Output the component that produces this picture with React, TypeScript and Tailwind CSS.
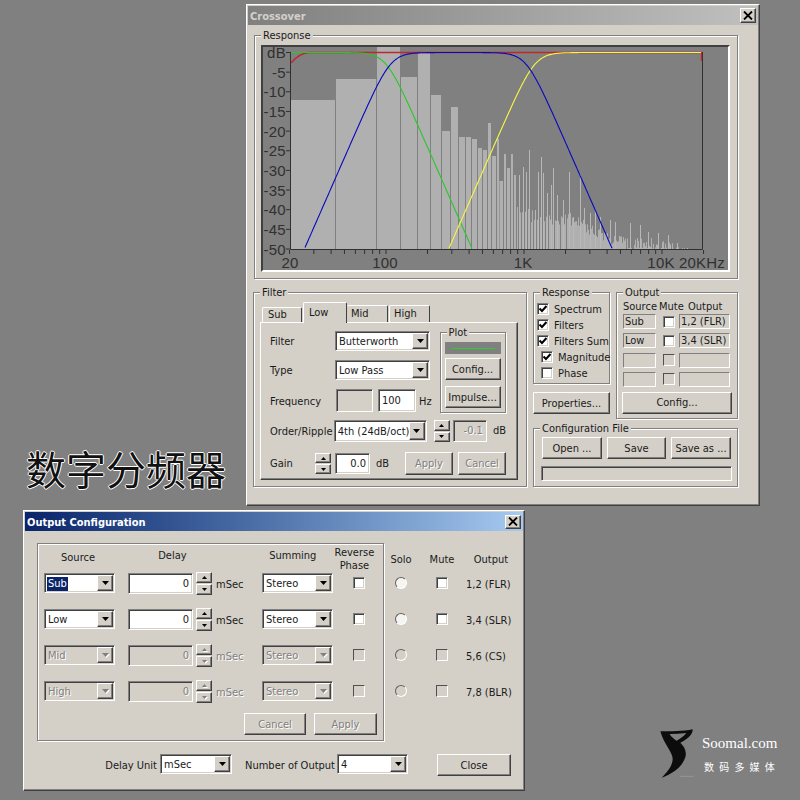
import * as React from "react";

const raised =
  "border border-t-white border-l-white border-r-[#404040] border-b-[#404040] shadow-[inset_-1px_-1px_0_#808080]";
const sunken =
  "border border-t-[#808080] border-l-[#808080] border-r-white border-b-white shadow-[inset_1px_1px_0_#404040,inset_-1px_-1px_0_#d4d0c8]";
const thinSunken = "border border-t-[#808080] border-l-[#808080] border-r-white border-b-white";
const disabledText = "text-[#808080] [text-shadow:1px_1px_0_white]";

function Group({ title, className, children }: { title?: string; className: string; children: React.ReactNode }) {
  return (
    <div className={`relative border border-[#808080] shadow-[1px_1px_0_white,inset_1px_1px_0_white] ${className}`}>
      {title && (
        <span className="absolute -top-[7px] left-[6px] bg-[#d4d0c8] px-[2px] leading-[14px] whitespace-nowrap">
          {title}
        </span>
      )}
      {children}
    </div>
  );
}

function Btn({ label, className, disabled }: { label: string; className: string; disabled?: boolean }) {
  return (
    <div className={`flex items-center justify-center whitespace-nowrap bg-[#d4d0c8] pt-px ${raised} ${disabled ? disabledText : ""} ${className}`}>
      {label}
    </div>
  );
}

function Arrow({ disabled, small, up }: { disabled?: boolean; small?: boolean; up?: boolean }) {
  const w = small ? 5 : 7;
  const h = small ? 3 : 4;
  return (
    <svg width={w} height={h} viewBox={`0 0 ${w} ${h}`} className={disabled ? "drop-shadow-[1px_1px_0_white]" : ""}>
      <polygon
        points={up ? `0,${h} ${w},${h} ${w / 2},0` : `0,0 ${w},0 ${w / 2},${h}`}
        fill={disabled ? "#808080" : "#000"}
      />
    </svg>
  );
}

function Combo({
  value,
  className,
  disabled,
  selected,
}: {
  value: string;
  className: string;
  disabled?: boolean;
  selected?: boolean;
}) {
  return (
    <div className={`flex items-stretch overflow-hidden p-px ${sunken} ${disabled ? "bg-[#d4d0c8]" : "bg-white"} ${className}`}>
      <div className={`flex min-w-0 flex-1 items-center overflow-hidden whitespace-nowrap pt-px pl-px ${disabled ? disabledText : ""}`}>
        <span className={selected ? "bg-[#0a246a] px-px text-white" : "px-px"}>{value}</span>
      </div>
      <div className={`flex w-[16px] shrink-0 items-center justify-center bg-[#d4d0c8] ${raised}`}>
        <Arrow disabled={disabled} />
      </div>
    </div>
  );
}

function Spin({ className, disabled }: { className: string; disabled?: boolean }) {
  return (
    <div className={`flex shrink-0 flex-col gap-px ${className}`}>
      <div className={`flex flex-1 items-center justify-center bg-[#d4d0c8] ${raised}`}>
        <Arrow small up disabled={disabled} />
      </div>
      <div className={`flex flex-1 items-center justify-center bg-[#d4d0c8] ${raised}`}>
        <Arrow small disabled={disabled} />
      </div>
    </div>
  );
}

function Field({
  value,
  className,
  disabled,
  right,
}: {
  value?: string;
  className: string;
  disabled?: boolean;
  right?: boolean;
}) {
  return (
    <div
      className={`flex shrink-0 items-center px-[3px] ${sunken} ${disabled ? `bg-[#d4d0c8] ${disabledText}` : "bg-white"} ${right ? "justify-end" : ""} ${className}`}
    >
      {value}
    </div>
  );
}

function Check({ checked, disabled, className = "" }: { checked?: boolean; disabled?: boolean; className?: string }) {
  return (
    <div
      className={`flex h-[12px] w-[12px] shrink-0 items-center justify-center ${
        disabled
          ? "border border-t-[#505050] border-l-[#505050] border-r-white border-b-white bg-[#d4d0c8]"
          : `${sunken} bg-white`
      } ${className}`}
    >
      {checked && (
        <svg width="10" height="10" viewBox="0 0 10 10">
          <path d="M1.5 4.5 L4 7 L8.5 2" fill="none" stroke="#000" strokeWidth="2" />
        </svg>
      )}
    </div>
  );
}

function Radio({ disabled }: { disabled?: boolean }) {
  return (
    <div
      className={`h-[12px] w-[12px] rounded-full border-[1.5px] border-t-[#606060] border-l-[#606060] border-r-white border-b-white ${disabled ? "bg-[#d4d0c8]" : "bg-[#f4f4f0]"}`}
    />
  );
}

function CloseBox({ className }: { className: string }) {
  return (
    <div className={`flex items-center justify-center bg-[#d4d0c8] ${raised} ${className}`}>
      <svg width="10" height="9" viewBox="0 0 10 9">
        <path d="M1 0.5 L9 8.5 M9 0.5 L1 8.5" stroke="#000" strokeWidth="1.8" />
      </svg>
    </div>
  );
}

// spectrum bars taken off the picture: [left, right, top]
const BARS: [number, number, number][] = [
  [291, 335, 100], [336, 376, 79], [377, 400, 47], [401, 417, 77], [418, 430, 53], [431, 441, 95],
  [442, 450, 131], [451, 458, 107], [459, 465, 137], [466, 471, 137], [472, 477, 139], [478, 482, 148],
  [483, 487, 150], [488, 491, 123], [492, 496, 156], [497, 499, 139], [499.5, 503, 181], [504, 506, 154],
  [507, 510, 168], [511, 513, 154], [514, 516, 175],
];

const SPIKES: [number, number][] = [
  [519, 175], [523, 167], [526, 172], [529, 150], [535, 210], [538, 172], [541, 157], [543, 173], [547, 193],
  [551, 185], [553, 168], [557, 195], [563, 200], [569, 172], [573, 217], [580, 175], [584, 208], [590, 213],
  [595, 210], [600, 217], [610, 220], [615, 222], [630, 223], [640, 225], [648, 232], [658, 233], [668, 235],
  [677, 243], [687, 248],
];

const ENVELOPE: [number, number][] = [
  [516, 205], [540, 212], [570, 212], [600, 226], [620, 236], [660, 238], [680, 244], [690, 249],
];

function envelope(x: number) {
  for (let i = 1; i < ENVELOPE.length; i++) {
    const [x0, y0] = ENVELOPE[i - 1];
    const [x1, y1] = ENVELOPE[i];
    if (x <= x1) return y0 + ((x - x0) / (x1 - x0)) * (y1 - y0);
  }
  return 249;
}

function noise(x: number) {
  const v = Math.sin(x * 12.9898) * 43758.5453;
  return v - Math.floor(v);
}

const xOf = (f: number) => 524 + Math.log10(f / 1000) * 138;
const yOf = (db: number) => 52.5 - db * 3.93;

function curve(hp: number | null, lp: number | null, x0: number, x1: number) {
  const pts: string[] = [];
  for (let x = x0; x <= x1; x++) {
    const f = 1000 * Math.pow(10, (x - 524) / 138);
    let db = 0;
    if (hp) db -= 10 * Math.log10(1 + Math.pow(hp / f, 8));
    if (lp) db -= 10 * Math.log10(1 + Math.pow(f / lp, 8));
    if (db >= -50) pts.push(`${x},${yOf(db).toFixed(1)}`);
  }
  return pts.join(" ");
}

function ResponseChart() {
  const ticks: number[] = [];
  for (const d of [10, 100, 1000]) {
    for (let k = 1; k < 10; k++) {
      const f = d * k;
      if (f >= 20) ticks.push(f);
    }
  }
  ticks.push(10000, 20000);

  const columns: React.ReactNode[] = [];
  for (let x = 517; x < 690; x++) {
    if (x < 572 && x % 3 === 2) continue;
    const top = envelope(x) + noise(x) * 14;
    columns.push(<rect key={x} x={x} y={top} width="1" height={Math.max(249 - top, 0)} fill="#b0b0b0" />);
  }

  return (
    <svg viewBox="263 47 465 223" className="block h-full w-full overflow-visible">
      <rect x="263" y="47" width="465" height="223" fill="#808080" />
      {BARS.map(([l, r, t]) => (
        <rect key={l} x={l} y={t} width={r - l} height={249 - t} fill="#b0b0b0" />
      ))}
      {columns}
      {SPIKES.map(([x, t]) => (
        <rect key={x} x={x} y={t} width="1" height={249 - t} fill="#b8b8b8" />
      ))}
      <path d="M290.5 52 V249.5 H702.5 V52" fill="none" stroke="#303030" />
      {[0, 5, 10, 15, 20, 25, 30, 35, 40, 45, 50].map((d) => (
        <line key={d} x1="286" x2="290" y1={yOf(-d)} y2={yOf(-d)} stroke="#303030" />
      ))}
      {ticks.map((f) => (
        <line key={f} x1={xOf(f)} x2={xOf(f)} y1="250" y2="254" stroke="#303030" />
      ))}
      <g fill="#303030" fontSize="15" fontFamily="'Liberation Sans', sans-serif" textAnchor="end" letterSpacing="0.3">
        {[0, 5, 10, 15, 20, 25, 30, 35, 40, 45, 50].map((d) => (
          <text key={d} x="286" y={yOf(-d) + 5.5}>
            {d === 0 ? "dB" : `-${d}`}
          </text>
        ))}
      </g>
      <g fill="#303030" fontSize="15" fontFamily="'Liberation Sans', sans-serif" textAnchor="middle" letterSpacing="0.2">
        <text x="290" y="268">20</text>
        <text x="385" y="268">100</text>
        <text x="523" y="268">1K</text>
        <text x="661" y="268">10K</text>
        <text x="702" y="268">20KHz</text>
      </g>
      <path
        d="M291 63 C295 58 300 53.5 309 52.5 H700 L701.5 52.5 V61"
        fill="none"
        stroke="#c02828"
        strokeWidth="1.3"
      />
      <polyline points={curve(null, 100, 291, 480)} fill="none" stroke="#28c828" strokeWidth="1.1" />
      <polyline points={curve(1200, null, 440, 701)} fill="none" stroke="#f8f840" strokeWidth="1.1" />
      <polyline points={curve(108, 1035, 295, 620)} fill="none" stroke="#0808c0" strokeWidth="1.1" />
    </svg>
  );
}

function FilterPanel() {
  return (
    <Group title="Filter" className="-ml-px h-[195px] w-[274px] pt-[9px] pl-[6px]">
      <div className="flex items-end pl-[2px]">
        <div className="mr-px flex h-[15px] w-[40px] items-center rounded-t-[2px] border-t border-l border-r border-t-white border-l-white border-r-[#404040] pl-[5px]">
          Sub
        </div>
        <div className="relative z-10 -mb-px flex h-[21px] w-[44px] items-start rounded-t-[2px] border-t border-l border-r border-t-white border-l-white border-r-[#404040] bg-[#d4d0c8] pt-[3px] pl-[5px]">
          Low
        </div>
        <div className="mr-px flex h-[17px] w-[41px] items-center rounded-t-[2px] border-t border-r border-t-white border-r-[#404040] pl-[4px]">
          Mid
        </div>
        <div className="flex h-[17px] w-[41px] items-center rounded-t-[2px] border-t border-l border-r border-t-white border-l-white border-r-[#404040] pl-[4px]">
          High
        </div>
      </div>
      <div className={`h-[158px] w-[258px] pt-[8px] pr-[11px] pl-[9px] ${raised}`}>
        <div className="flex h-[82px]">
          <div className="w-[171px]">
            <div className="flex items-center">
              <span className="w-[65px] pt-[2px]">Filter</span>
              <Combo value="Butterworth" className="h-[20px] w-[95px]" />
            </div>
            <div className="mt-[9px] flex items-center">
              <span className="w-[65px] pt-[2px]">Type</span>
              <Combo value="Low Pass" className="h-[20px] w-[95px]" />
            </div>
            <div className="mt-[9px] flex items-center">
              <span className="w-[66px] pt-[2px]">Frequency</span>
              <Field disabled className="h-[23px] w-[37px]" />
              <Field value="100" className="ml-[5px] h-[23px] w-[38px]" />
              <span className="ml-[3px] pt-[2px]">Hz</span>
            </div>
          </div>
          <Group title="Plot" className="mt-px h-[81px] w-[67px] pt-[9px] pl-[4px]">
            <div className="flex h-[12px] w-[56px] items-center justify-center bg-[#808080]">
              <div className="h-px w-[44px] bg-[#28d028]" />
            </div>
            <Btn label="Config..." className="mt-[4px] h-[22px] w-[56px]" />
            <Btn label="Impulse..." className="mt-[6px] h-[22px] w-[56px]" />
          </Group>
        </div>
        <div className="mt-[7px] flex items-center">
          <span className="w-[65px] pt-[2px] whitespace-nowrap">Order/Ripple</span>
          <Combo value="4th (24dB/oct)" className="h-[22px] w-[95px]" />
          <Spin className="ml-[7px] h-[22px] w-[16px]" />
          <Field value="-0.1" disabled right className="ml-[3px] h-[22px] w-[34px]" />
          <span className="ml-[6px]">dB</span>
        </div>
        <div className="mt-[10px] flex items-center">
          <span className="w-[45px]">Gain</span>
          <Spin className="h-[21px] w-[16px]" />
          <Field value="0.0" right className="ml-[4px] h-[21px] w-[35px]" />
          <span className="ml-[6px]">dB</span>
          <Btn label="Apply" disabled className="ml-auto h-[23px] w-[48px]" />
          <Btn label="Cancel" disabled className="ml-[5px] h-[23px] w-[48px]" />
        </div>
      </div>
    </Group>
  );
}

const OUT_ROWS = [
  { src: "Sub", out: "1,2 (FLR)", on: true },
  { src: "Low", out: "3,4 (SLR)", on: true },
  { src: "", out: "", on: false },
  { src: "", out: "", on: false },
];

function RightColumn() {
  const boxes = [
    { label: "Spectrum", checked: true, indent: false },
    { label: "Filters", checked: true, indent: false },
    { label: "Filters Sum", checked: true, indent: false },
    { label: "Magnitude", checked: true, indent: true },
    { label: "Phase", checked: false, indent: true },
  ];
  return (
    <div className="ml-[6px] w-[205px]">
      <div className="flex gap-[6px]">
        <div className="w-[77px]">
          <Group title="Response" className="h-[92px] pt-[8px] pl-[3px]">
            {boxes.map((b) => (
              <div key={b.label} className={`flex h-[16px] items-center whitespace-nowrap ${b.indent ? "pl-[4px]" : ""}`}>
                <Check checked={b.checked} />
                <span className="ml-[5px] pt-[2px]">{b.label}</span>
              </div>
            ))}
          </Group>
          <Btn label="Properties..." className="mt-[8px] h-[22px] w-[77px]" />
        </div>
        <Group title="Output" className="h-[127px] w-[122px] pt-[6px]">
          <div className="flex h-[15px] items-center whitespace-nowrap pl-[6px]">
            <span className="w-[36px]">Source</span>
            <span className="w-[29px]">Mute</span>
            <span>Output</span>
          </div>
          <div className="flex flex-col gap-[4.33px] pl-[6px]">
            {OUT_ROWS.map((r, i) => (
              <div key={i} className="flex h-[15px] items-center">
                <div className={`flex h-full w-[33px] items-center pt-px pl-px ${thinSunken}`}>{r.src}</div>
                <Check disabled={!r.on} className="ml-[7px]" />
                <div className={`ml-[4px] flex h-full w-[51px] items-center pt-px pl-px whitespace-nowrap ${thinSunken}`}>{r.out}</div>
              </div>
            ))}
          </div>
          <Btn label="Config..." className="mt-[5px] ml-[5px] h-[22px] w-[110px]" />
        </Group>
      </div>
      <Group title="Configuration File" className="mt-[9px] h-[59px] pt-[8px] pl-[7px]">
        <div className="flex gap-[5px]">
          <Btn label="Open ..." className="ml-px h-[22px] w-[60px]" />
          <Btn label="Save" className="h-[22px] w-[59px]" />
          <Btn label="Save as ..." className="h-[22px] w-[60px]" />
        </div>
        <div className={`mt-[7px] h-[15px] w-[191px] ${sunken}`} />
      </Group>
    </div>
  );
}

function CrossoverWindow() {
  return (
    <div className={`absolute top-[4px] left-[246px] h-[502px] w-[514px] bg-[#d4d0c8] ${raised}`}>
      <div className="m-px flex h-[19px] items-center justify-between bg-linear-to-r from-[#808080] to-[#c0c0c0] pl-[2px]">
        <span className="pt-[2px] font-bold text-[#d4d0c8]">Crossover</span>
        <CloseBox className="mr-[2px] h-[15px] w-[16px]" />
      </div>
      <Group title="Response" className="mt-[10px] ml-[7px] h-[244px] w-[484px] pt-[9px] pl-[6px]">
        <div className="h-[227px] w-[469px] border-2 border-t-[#404040] border-l-[#404040] border-r-white border-b-white">
          <ResponseChart />
        </div>
      </Group>
      <div className="mt-[13px] ml-[7px] flex">
        <FilterPanel />
        <RightColumn />
      </div>
    </div>
  );
}

const SOURCES = [
  { src: "Sub", on: true, out: "1,2 (FLR)" },
  { src: "Low", on: true, out: "3,4 (SLR)" },
  { src: "Mid", on: false, out: "5,6 (CS)" },
  { src: "High", on: false, out: "7,8 (BLR)" },
];

function OutputConfigWindow() {
  return (
    <div className={`absolute top-[510px] left-[23px] h-[281px] w-[502px] bg-[#d4d0c8] ${raised}`}>
      <div className="m-px flex h-[19px] items-center justify-between bg-linear-to-r from-[#0a246a] to-[#a6caf0] pl-[2px]">
        <span className="pt-[2px] font-bold text-white">Output Configuration</span>
        <CloseBox className="mr-[2px] h-[14px] w-[16px]" />
      </div>
      <div className="mt-[12px] ml-[13px] flex">
        <Group className="h-[198px] w-[347px] pl-[6px]">
          <div className="flex h-[29px] text-center">
            <span className="w-[69px] pt-[7px]">Source</span>
            <span className="ml-[15px] w-[92px] pt-[5px]">Delay</span>
            <span className="ml-[42px] w-[67px] pt-[5px]">Summing</span>
            <span className="w-[58px] pt-[2px] leading-[13px]">
              Reverse
              <br />
              Phase
            </span>
          </div>
          <div className="flex flex-col gap-[16px]">
            {SOURCES.map((s) => (
              <div key={s.src} className="flex h-[20px] items-start">
                <Combo value={s.src} selected={s.src === "Sub"} disabled={!s.on} className="h-[20px] w-[71px]" />
                <Field value="0" right disabled={!s.on} className="ml-[13px] h-[21px] w-[65px]" />
                <Spin disabled={!s.on} className="-mt-px ml-[3px] h-[23px] w-[16px]" />
                <span className={`ml-[4px] w-[46px] pt-[5px] ${s.on ? "" : disabledText}`}>mSec</span>
                <Combo value="Stereo" disabled={!s.on} className="h-[20px] w-[71px]" />
                <Check disabled={!s.on} className="mt-[4px] ml-[20px]" />
              </div>
            ))}
          </div>
          <div className="mt-[12px] flex justify-end gap-[8px] pr-[6px]">
            <Btn label="Cancel" disabled className="h-[22px] w-[62px]" />
            <Btn label="Apply" disabled className="h-[22px] w-[63px]" />
          </div>
        </Group>
        <div className="pt-px">
          <div className="flex h-[29px] pt-[9px] text-center">
            <span className="w-[34px]">Solo</span>
            <span className="w-[48px]">Mute</span>
            <span className="w-[50px]">Output</span>
          </div>
          <div className="flex flex-col gap-[16px]">
            {SOURCES.map((s) => (
              <div key={s.src} className="flex h-[20px] items-center">
                <div className="flex w-[34px] justify-center">
                  <Radio disabled={!s.on} />
                </div>
                <div className="flex w-[48px] justify-center">
                  <Check disabled={!s.on} />
                </div>
                <span className="pt-[4px] whitespace-nowrap">{s.out}</span>
              </div>
            ))}
          </div>
        </div>
      </div>
      <div className="mt-[13px] flex items-start">
        <span className="h-[20px] w-[133px] pt-[5px] text-right">Delay Unit</span>
        <Combo value="mSec" className="ml-[3px] h-[20px] w-[72px]" />
        <span className="h-[20px] w-[103px] pt-[5px] text-right whitespace-nowrap">Number of Output</span>
        <Combo value="4" className="ml-[2px] h-[20px] w-[71px]" />
        <Btn label="Close" className="ml-[29px] h-[22px] w-[74px]" />
      </div>
    </div>
  );
}

function SoomalLogo() {
  return (
    <div className="absolute top-[727px] left-[657px] flex">
      <svg width="40" height="54" viewBox="50 50 120 160">
        <path
          fillRule="evenodd"
          fill="#0c0c0c"
          d="M60 62 C90 62 130 62 157 56 C158 72 140 86 120 96 C132 108 140 122 135 140 C125 170 95 190 64 201 C80 185 97 165 97 145 C97 125 70 100 60 62 Z M88 70 C105 70 122 69 138 67 C130 78 118 85 109 90 C100 84 92 78 88 70 Z"
        />
        <path d="M120 197 H160" stroke="#a0a0a0" strokeWidth="2" />
      </svg>
      <div className="ml-[5px] flex flex-col pt-[7px] text-white">
        <span className="font-['Liberation_Serif',serif] text-[15px] leading-[19px] whitespace-nowrap">Soomal.com</span>
        <span className="mt-[8px] pl-[2px] font-['Noto_Sans_CJK_SC',sans-serif] text-[10px] leading-[12px] tracking-[5.2px] whitespace-nowrap">
          数码多媒体
        </span>
      </div>
    </div>
  );
}

export default function App() {
  return (
    <div className="relative h-[800px] w-[800px] overflow-hidden bg-[#808080] font-['DejaVu_Sans_Condensed','Liberation_Sans',sans-serif] text-[11px] leading-[14px] text-[#1a1a1a]">
      <CrossoverWindow />
      <OutputConfigWindow />
      <div className="absolute top-[440px] left-[26px] font-['Noto_Sans_CJK_SC',sans-serif] text-[40px] leading-[56px] whitespace-nowrap text-[#111] [text-shadow:1px_0_0_white,-1px_0_0_white,0_1px_0_white,0_-1px_0_white]">
        数字分频器
      </div>
      <SoomalLogo />
    </div>
  );
}
